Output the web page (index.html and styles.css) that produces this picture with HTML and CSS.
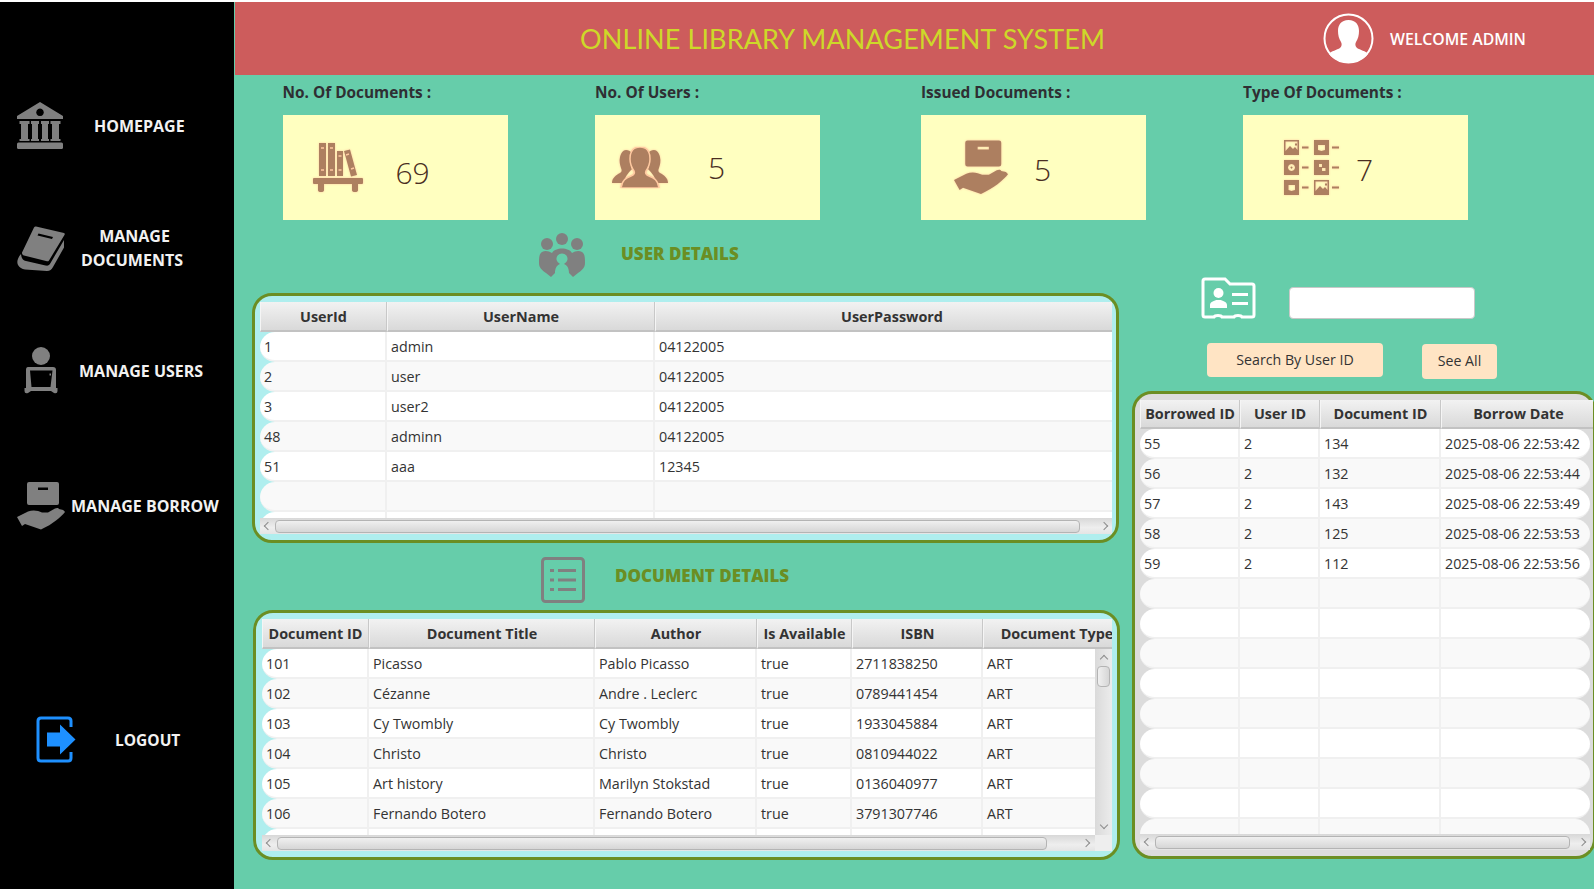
FILE: index.html
```html
<!DOCTYPE html>
<html lang="en">
<head>
<meta charset="utf-8">
<title>Online Library Management System</title>
<link rel="stylesheet" href="styles.css">
</head>
<body>
<svg class="defs" width="0" height="0" aria-hidden="true">
  <symbol id="i-hand" viewBox="0 0 48 48">
    <path fill-rule="evenodd" d="M12 0H40Q42 0 42 2V21Q42 23 40 23H12Q10 23 10 21V2Q10 0 12 0ZM21 5.500V8H31V5.500Z"/>
    <path d="M0 35L11 29.500C16 27.500 21 28.500 25 30.500H31L38 26.500C40 25.500 41.500 26 42 27L44 27.500C46 27.500 47 28.500 48 30C44 35 36 42 24 47.500L8 42L5 44Z"/>
    <path class="cut" d="M16 34.500C22 36 26 36.500 31 35C34 34 38 31 43 28.500M31 31L35 33M37 27.500L40 29.500" fill="none" stroke-width="1.200"/>
  </symbol>
</svg>
<div class="app">
  <nav class="sidebar">
    <a class="nav-item nav-home">
      <svg class="nav-icon" width="46" height="47" viewBox="0 0 46 47"><path fill-rule="evenodd" d="M23 0L46 14V17H0V14ZM23 6.500A3.800 3.800 0 1 0 23.010 6.500Z"/><path d="M2.500 19H12.500V22H11V37H12.500V39H2.500V37H4V22H2.500ZM14 19H22V22H21V37H22V39H14V37H15V22H14ZM24 19H32V22H31V37H32V39H24V37H25V22H24ZM33.500 19H43.500V22H42V37H43.500V39H33.500V37H35V22H33.500Z"/><rect y="40.500" width="46" height="6.500" rx="1.500"/></svg>
      <span>HOMEPAGE</span>
    </a>
    <a class="nav-item nav-docs">
      <svg class="nav-icon" width="48" height="45" viewBox="0 0 48 45"><path fill-rule="evenodd" d="M19 0.500L47 7C47.800 7.300 48 8 47.600 8.700L32 34.500C31.500 35.200 30.800 35.500 30 35.300L7 29.500C5 29 4.500 27 5.500 25.500L17 1.500C17.500 0.700 18.200 0.300 19 0.500ZM21.500 7.500L20.500 9.500L35 13L36 11Z"/><path d="M4 28C0.500 32 -0.500 36 1 39C2.500 42 5 42.800 8 43.500L30 45C33 45 34.500 43.500 36 41L47 21.500V14L33.500 37C32.200 39.300 31 40 28.500 39.500L9 35C6 34.300 4.500 32.500 4 28Z"/></svg>
      <span class="nav-two">MANAGE<br>DOCUMENTS</span>
    </a>
    <a class="nav-item nav-users">
      <svg class="nav-icon" width="34" height="47" viewBox="0 0 34 47"><circle cx="17" cy="9" r="9"/><path fill-rule="evenodd" d="M4 20H29Q32 20 32 23V41H33.500V44Q33.500 47 30 46L27 44H7L4 46Q0.500 47 0.500 44V41H2V23Q2 20 4 20ZM6 23.500L7.500 40H26.500L28.500 23.500ZM25.500 26.500V28.500H27V26.500Z"/></svg>
      <span>MANAGE USERS</span>
    </a>
    <a class="nav-item nav-borrow">
      <svg class="nav-icon hand-dark" width="48" height="48"><use href="#i-hand"/></svg>
      <span>MANAGE BORROW</span>
    </a>
    <a class="nav-item nav-logout">
      <svg class="logout-icon" width="40" height="47" viewBox="0 0 40 47"><path d="M35 11V5Q35 2 32 2H5Q2 2 2 5V42Q2 45 5 45H32Q35 45 35 42V36" fill="none" stroke="currentColor" stroke-width="3"/><path d="M11 16.500H24V8.500L39.500 23.500L24 38.500V30.500H11Z" fill="currentColor"/></svg>
      <span>LOGOUT</span>
    </a>
  </nav>

  <main class="main">
    <header class="topbar">
      <h1 class="title">ONLINE LIBRARY MANAGEMENT SYSTEM</h1>
      <div class="welcome">
        <svg width="51" height="51" viewBox="0 0 51 51"><circle cx="25.500" cy="25.500" r="24" fill="none" stroke="#fff" stroke-width="2"/><path d="M25.500 7C33 7 36 12 36 18C36 22 35 26 33 29C32 31 32 33 34 35C37 37 43 38 45 41C41 46 33 49.500 25.500 49.500C18 49.500 10 46 6 41C8 38 14 37 17 35C19 33 19 31 18 29C16 26 15 22 15 18C15 12 18 7 25.500 7Z" fill="#fff"/></svg>
        <span>WELCOME ADMIN</span>
      </div>
    </header>

    <section class="stats">
      <div class="stat stat-docs">
        <div class="stat-label">No. Of Documents :</div>
        <div class="card">
          <svg class="card-icon" width="50" height="49" viewBox="0 0 50 49"><path d="M6 0H13V33H6ZM15 0H22V33H15ZM24 8H30V33H24ZM31 8L37 6.500L44 32L38 33.500Z"/><path class="cut" d="M8 5H11M8 27H11M17 5H20M17 27H20M25.500 13H28.500M25.500 27H28.500M33 12L36 11M38 26L41 25" stroke-width="1.500" fill="none"/><rect y="35" width="50" height="6" rx="1"/><path d="M5 41H11V47Q11 49 8 49Q5 49 5 47ZM39 41H45V47Q45 49 42 49Q39 49 39 47Z"/></svg>
          <span class="num">69</span>
        </div>
      </div>
      <div class="stat stat-users">
        <div class="stat-label">No. Of Users :</div>
        <div class="card">
          <svg class="card-icon" width="56" height="41" viewBox="0 0 56 41"><path d="M14 3C19 3 21 7 20 13C19 17 18 20 20 22C16 26 13 30 11 36H0C0 31 4 28 8 26C10 25 10 23 9 21C8 18 7 14 8 10C9 6 11 3 14 3ZM42 3C37 3 35 7 36 13C37 17 38 20 36 22C40 26 43 30 45 36H56C56 31 52 28 48 26C46 25 46 23 47 21C48 18 49 14 48 10C47 6 45 3 42 3Z"/><path class="halo" d="M28 0C35 0 38 5 38 12C38 17 36 21 34 24C33 26 34 28 37 29C42 31 46 33 47 41H9C10 33 14 31 19 29C22 28 23 26 22 24C20 21 18 17 18 12C18 5 21 0 28 0Z"/></svg>
          <span class="num">5</span>
        </div>
      </div>
      <div class="stat stat-issued">
        <div class="stat-label">Issued Documents :</div>
        <div class="card">
          <svg class="card-icon hand-light" width="54" height="55"><use href="#i-hand"/></svg>
          <span class="num">5</span>
        </div>
      </div>
      <div class="stat stat-types">
        <div class="stat-label">Type Of Documents :</div>
        <div class="card">
          <svg class="card-icon" width="56" height="55" viewBox="0 0 56 55"><path fill-rule="evenodd" d="M0 0H15V15H0ZM1.500 11L6 6L9 9L11 7L13.500 10V1.500H1.500ZM11 3.500H13V5.500H11Z"/><path fill-rule="evenodd" d="M30 0H45V15H30ZM34 5V10L37.500 11L41 10V5Z"/><path fill-rule="evenodd" d="M0 20H15V35H0ZM7.500 24A3.500 3.500 0 1 0 7.510 24ZM7.500 26.500A1 1 0 1 1 7.490 26.500Z"/><path fill-rule="evenodd" d="M30 20H45V35H30ZM35 24V27H38V24ZM38 28V31H41.500V28Z"/><path fill-rule="evenodd" d="M0 40H15V55H0ZM4.500 45V50L7.500 51L11 50V45Z"/><path fill-rule="evenodd" d="M30 40H45V55H30ZM31.500 51L36 46L39 49L41 47L43.500 50V41.500H31.500ZM41 43.500H43V45.500H41Z"/><path d="M18 6.500H24.500V8.500H18ZM48 6.500H55V8.500H48ZM18 26.500H24.500V28.500H18ZM48 26.500H55V28.500H48ZM18 46.500H24.500V48.500H18ZM48 46.500H55V48.500H48Z"/></svg>
          <span class="num">7</span>
        </div>
      </div>
    </section>

    <section class="content">
      <div class="left-col">
        <div class="heading heading-users">
          <svg class="heading-icon" width="46" height="44" viewBox="0 0 46 44"><circle cx="8" cy="11" r="6"/><circle cx="23" cy="6" r="6"/><circle cx="38" cy="11" r="6"/><path fill-rule="evenodd" d="M3 19C6 17 10 18 13 20C16 14 30 14 33 20C36 18 40 17 43 19C46 21 46 25 46 30C46 35 43 37 39 40L34 44L30 40C30 35 28 32 25 31A5.500 5.500 0 1 0 21 31C18 32 16 35 16 40L12 44L7 40C3 37 0 35 0 30C0 25 0 21 3 19Z"/></svg>
          <h2>USER DETAILS</h2>
        </div>
        <div class="panel panel-users">
          <div class="tv">
            <table class="t t-users t-head">
              <colgroup><col class="u1"><col class="u2"><col></colgroup>
              <tr><th>UserId</th><th>UserName</th><th>UserPassword</th></tr>
            </table>
            <div class="tv-body">
              <div class="tv-clip">
                <table class="t t-users">
                  <colgroup><col class="u1"><col class="u2"><col></colgroup>
                  <tr><td>1</td><td>admin</td><td>04122005</td></tr>
                  <tr><td>2</td><td>user</td><td>04122005</td></tr>
                  <tr><td>3</td><td>user2</td><td>04122005</td></tr>
                  <tr><td>48</td><td>adminn</td><td>04122005</td></tr>
                  <tr><td>51</td><td>aaa</td><td>12345</td></tr>
                  <tr><td></td><td></td><td></td></tr>
                  <tr><td></td><td></td><td></td></tr>
                </table>
              </div>
            </div>
            <div class="hbar">
              <i class="arrow a-left"></i>
              <div class="track"><div class="thumb thumb-users"></div></div>
              <i class="arrow a-right"></i>
            </div>
          </div>
        </div>

        <div class="heading heading-docs">
          <svg class="heading-icon" width="44" height="46" viewBox="0 0 44 46"><rect x="1.500" y="1.500" width="41" height="43" rx="3" fill="none" stroke="currentColor" stroke-width="3"/><path d="M9 12H13V15H9ZM17 12H35V15H17ZM9 21.500H13V24.500H9ZM17 21.500H35V24.500H17ZM9 31H13V34H9ZM17 31H35V34H17Z" fill="currentColor"/></svg>
          <h2>DOCUMENT DETAILS</h2>
        </div>
        <div class="panel panel-docs">
          <div class="tv">
            <table class="t t-docs t-head">
              <colgroup><col class="d1"><col class="d2"><col class="d3"><col class="d4"><col class="d5"><col class="d6"></colgroup>
              <tr><th>Document ID</th><th>Document Title</th><th>Author</th><th>Is Available</th><th>ISBN</th><th>Document Type</th></tr>
            </table>
            <div class="tv-body">
              <div class="tv-clip">
                <table class="t t-docs">
                  <colgroup><col class="d1"><col class="d2"><col class="d3"><col class="d4"><col class="d5"><col class="d6"></colgroup>
                  <tr><td>101</td><td>Picasso</td><td>Pablo Picasso</td><td>true</td><td>2711838250</td><td>ART</td></tr>
                  <tr><td>102</td><td>Cézanne</td><td>Andre . Leclerc</td><td>true</td><td>0789441454</td><td>ART</td></tr>
                  <tr><td>103</td><td>Cy Twombly</td><td>Cy Twombly</td><td>true</td><td>1933045884</td><td>ART</td></tr>
                  <tr><td>104</td><td>Christo</td><td>Christo</td><td>true</td><td>0810944022</td><td>ART</td></tr>
                  <tr><td>105</td><td>Art history</td><td>Marilyn Stokstad</td><td>true</td><td>0136040977</td><td>ART</td></tr>
                  <tr><td>106</td><td>Fernando Botero</td><td>Fernando Botero</td><td>true</td><td>3791307746</td><td>ART</td></tr>
                  <tr><td></td><td></td><td></td><td></td><td></td><td></td></tr>
                </table>
              </div>
              <div class="vbar">
                <i class="arrow a-up"></i>
                <div class="vtrack"><div class="vthumb"></div></div>
                <i class="arrow a-down"></i>
              </div>
            </div>
            <div class="hbar">
              <i class="arrow a-left"></i>
              <div class="track"><div class="thumb thumb-docs"></div></div>
              <i class="arrow a-right arrow-inset"></i>
              <div class="corner"></div>
            </div>
          </div>
        </div>
      </div>

      <div class="right-col">
        <div class="search-row">
          <svg class="id-icon" width="55" height="42" viewBox="0 0 55 42"><path d="M4 2H24L29 7H51Q53 7 53 9V38Q53 40 51 40H41C40 38 34 38 33 40H21C20 38 14 38 13 40H4Q2 40 2 38V4Q2 2 4 2Z" fill="none" stroke="#fff" stroke-width="3"/><circle cx="17.500" cy="16" r="5" fill="#fff"/><path d="M9 31V28C9 25 13 24 15 23H20C22 24 26 25 26 28V31Z" fill="#fff"/><path d="M31 16H47V19H31ZM31 25H47V28H31Z" fill="#fff"/></svg>
          <input class="search-input" type="text" aria-label="User ID">
        </div>
        <div class="btn-row">
          <button class="btn btn-search" type="button">Search By User ID</button>
          <button class="btn btn-all" type="button">See All</button>
        </div>
        <div class="panel panel-borrow">
          <div class="tv">
            <table class="t t-borrow t-head">
              <colgroup><col class="b1"><col class="b2"><col class="b3"><col></colgroup>
              <tr><th>Borrowed ID</th><th>User ID</th><th>Document ID</th><th>Borrow Date</th></tr>
            </table>
            <div class="tv-body">
              <div class="tv-clip">
                <table class="t t-borrow-body t-round">
                  <colgroup><col class="b1"><col class="b2"><col class="b3"><col></colgroup>
                  <tr><td>55</td><td>2</td><td>134</td><td>2025-08-06 22:53:42</td></tr>
                  <tr><td>56</td><td>2</td><td>132</td><td>2025-08-06 22:53:44</td></tr>
                  <tr><td>57</td><td>2</td><td>143</td><td>2025-08-06 22:53:49</td></tr>
                  <tr><td>58</td><td>2</td><td>125</td><td>2025-08-06 22:53:53</td></tr>
                  <tr><td>59</td><td>2</td><td>112</td><td>2025-08-06 22:53:56</td></tr>
                  <tr><td></td><td></td><td></td><td></td></tr>
                  <tr><td></td><td></td><td></td><td></td></tr>
                  <tr><td></td><td></td><td></td><td></td></tr>
                  <tr><td></td><td></td><td></td><td></td></tr>
                  <tr><td></td><td></td><td></td><td></td></tr>
                  <tr><td></td><td></td><td></td><td></td></tr>
                  <tr><td></td><td></td><td></td><td></td></tr>
                  <tr><td></td><td></td><td></td><td></td></tr>
                  <tr><td></td><td></td><td></td><td></td></tr>
                </table>
              </div>
            </div>
            <div class="hbar">
              <i class="arrow a-left"></i>
              <div class="track"><div class="thumb thumb-borrow"></div></div>
              <i class="arrow a-right"></i>
            </div>
          </div>
        </div>
      </div>
    </section>
  </main>
</div>
</body>
</html>
```
FILE: styles.css
```css
* { box-sizing: border-box; }
html, body { margin: 0; height: 100%; background: #fff; overflow: hidden; }
body { font-family: "Open Sans", "Noto Sans", sans-serif; color: #333; }
.defs { position: absolute; }

.app { display: flex; height: 889px; padding-top: 2px; }

/* Sidebar */
.sidebar { width: 234px; flex: none; background: #000; display: flex; flex-direction: column; color: #f2f2f2; }
.nav-item { display: flex; align-items: center; font-size: 16px; font-weight: 700; }
.nav-icon { fill: #808080; flex: none; display: block; }
.nav-home { margin-top: 100px; padding-left: 17px; gap: 31px; }
.nav-docs { margin-top: 75px; padding-left: 17px; gap: 16px; }
.nav-two { text-align: center; line-height: 24px; width: 102px; text-indent: 5px; }
.nav-users { margin-top: 75px; padding-left: 24px; gap: 21px; }
.nav-borrow { margin-top: 88px; padding-left: 17px; gap: 6px; }
.nav-logout { margin-top: 186px; padding-left: 36px; gap: 39px; font-size: 15.500px; }
.logout-icon { color: #1e90ff; flex: none; display: block; }
.hand-dark .cut { stroke: #000; }

/* Main */
.main { flex: 1; min-width: 0; background: #66cdaa; display: flex; flex-direction: column; overflow: hidden; }
.topbar { height: 73px; flex: none; background: #cd5c5c; display: flex; align-items: center; padding: 0 68px 0 345px; justify-content: space-between; border-left: 1px solid #66cdaa; }
.title { margin: 0; font-family: "Comic Sans MS", Lato, sans-serif; font-weight: 400; font-size: 27px; letter-spacing: 0.1px; color: #cdd829; white-space: nowrap; }
.welcome { display: flex; align-items: center; gap: 16px; color: #fff; font-size: 15.8px; font-weight: 600; }

/* Stats */
.stats { display: grid; grid-template-columns: 312.500px 326px 322px 1fr; padding: 7px 0 0 48.500px; flex: none; }
.stat-label { height: 21px; line-height: 21px; margin-bottom: 12px; font-size: 15.4px; font-weight: 700; color: #2f2f33; }
.card { width: 225px; height: 105px; background: #ffffc0; display: flex; align-items: center; }
.card-icon { fill: #ad7f60; display: block; flex: none; filter: drop-shadow(0 0 1px #ffc9a0); }
.hand-light .cut { stroke: #ffc9a0; }
.cut { fill: none; }
.stat-docs .cut, .stat-users .halo { stroke: #ffc9a0; }
.stat-users .halo { stroke-width: 1.500; }
.num { font-weight: 300; font-size: 30px; color: #4a2e22; line-height: 1; }
.stat-docs .card { padding-left: 30px; gap: 33px; }
.stat-docs .num { margin-top: 11px; }
.stat-users .card { padding-left: 17px; gap: 40px; }
.stat-users .num { margin-top: 1px; }
.stat-issued .card { padding-left: 33px; gap: 26px; }
.stat-issued .num { margin-top: 5px; }
.stat-types .card { padding-left: 41px; gap: 16px; }
.stat-types .num { margin-top: 5px; }

/* Content */
.content { display: grid; grid-template-columns: 898px 1fr; flex: 1; min-height: 0; }
.left-col { padding-left: 18px; }
.heading { display: flex; align-items: center; }
.heading h2 { margin: 0; font-size: 17px; font-weight: 800; color: #6b8e23; }
.heading-icon { display: block; flex: none; fill: #808080; color: #808080; }
.heading-users { height: 44px; margin-top: 13px; margin-bottom: 16px; padding-left: 287px; gap: 36px; }
.heading-users h2 { margin-bottom: 4px; }
.heading-docs { height: 46px; margin-top: 14px; margin-bottom: 7px; padding-left: 289px; gap: 30px; }
.heading-docs h2 { margin-bottom: 10px; }

.panel { border: 3px solid #6b8e23; border-radius: 20px; background: #afeeee; height: 250px; }
.panel-users { width: 867px; padding: 6px 4px 6px 5px; }
.panel-docs { width: 867px; margin-left: 1px; padding: 6px 5px 6px 6px; }
.panel-borrow { width: 464px; height: 468px; margin-top: 12px; padding: 6px 0 6px 5px; background: #dcdcdc; }

.tv { height: 100%; display: flex; flex-direction: column; overflow: hidden; }
.tv-body { flex: 1; min-height: 0; display: flex; overflow: hidden; }
.tv-clip { flex: 1; min-width: 0; overflow: hidden; }

.t { border-collapse: separate; border-spacing: 0; table-layout: fixed; width: 100%; font-size: 14.3px; }
.t-head { flex: none; }
.t th { height: 30px; padding: 0; font-weight: 700; font-size: 14.4px; color: #333; white-space: nowrap; overflow: hidden; background: linear-gradient(#f2f2f2, #d9d9d9); border-right: 1px solid #c8c8c8; border-left: 1px solid #f5f5f5; border-bottom: 2px solid #c2c2c2; }
.t td { height: 30px; padding: 0 0 0 5px; color: #333; white-space: nowrap; overflow: hidden; background: #fff; border-right: 2px solid #f0f0f0; border-bottom: 2px solid #f0f0f0; }
.t tr:nth-child(even) td { background: #f9f9f9; }
.t td:first-child { border-radius: 15px 0 0 15px; }
.t-round td:last-child { border-radius: 0 15px 15px 0; border-right: 0; }
.t td:last-child { border-right: 0; }

.t-users { width: 869px; }
.t-users td { padding-left: 4px; }
.u1 { width: 127px; }
.u2 { width: 268px; }
.t-docs { width: 869px; }
.t-docs td { padding-left: 4px; }
.d1 { width: 107px; }
.d2 { width: 226px; }
.d3 { width: 162px; }
.d4 { width: 95px; }
.d5 { width: 131px; }
.d6 { width: 148px; }
.t-borrow { width: 456px; }
.t-borrow th { height: 29px; }
.t-borrow-body { width: 450px; }
.t-borrow-body td { padding-left: 4px; }
.b1 { width: 100px; }
.b2 { width: 80px; }
.b3 { width: 121px; }

/* Scrollbars */
.hbar { height: 16px; flex: none; display: flex; align-items: center; background: linear-gradient(#d8d8d8 0, #eee 60%, #e4e4e4); position: relative; }
.panel-borrow .hbar { width: 450px; }
.track { flex: 1; min-width: 0; height: 100%; padding: 2px 0 1px 4px; }
.thumb { height: 13px; border: 1px solid #b4b4b4; border-radius: 4px; background: linear-gradient(#f0f0f0, #d6d6d6); }
.thumb-users { width: 805px; }
.thumb-docs { width: 770px; }
.thumb-borrow { width: 415px; }
.arrow { flex: none; width: 6px; height: 6px; display: block; border-left: 1.500px solid #8c8c8c; border-bottom: 1.500px solid #8c8c8c; }
.a-left { margin-left: 5px; transform: rotate(45deg); }
.a-right { margin-right: 5px; transform: rotate(-135deg); }
.arrow-inset { margin-right: 6px; }
.corner { width: 17px; height: 100%; flex: none; background: #eee; }
.vbar { width: 17px; flex: none; display: flex; flex-direction: column; align-items: center; background: linear-gradient(90deg, #dadada, #ececec); padding: 5px 0; }
.vtrack { flex: 1; width: 100%; padding: 4px 2px 0; }
.vthumb { height: 21px; border: 1px solid #b4b4b4; border-radius: 4px; background: linear-gradient(90deg, #f0f0f0, #d6d6d6); }
.a-up { transform: rotate(135deg); margin-top: 2px; }
.a-down { transform: rotate(-45deg); margin-bottom: 2px; }

/* Search */
.search-row { display: flex; align-items: flex-end; margin-top: 57px; padding-left: 69px; gap: 33px; }
.id-icon { display: block; flex: none; }
.search-input { width: 186px; height: 32px; border: 1px solid #c8c8c8; border-radius: 4px; background: #fff; padding: 0; }
.btn-row { display: flex; align-items: flex-start; margin-top: 24px; padding-left: 75px; gap: 39px; }
.btn { border: 0; border-radius: 4px; background: #ffe4c4; font-family: inherit; font-size: 14.2px; color: #333; padding: 0 0 2px; }
.btn-search { width: 176px; height: 34px; }
.btn-all { width: 75px; height: 35px; margin-top: 1px; }
```
